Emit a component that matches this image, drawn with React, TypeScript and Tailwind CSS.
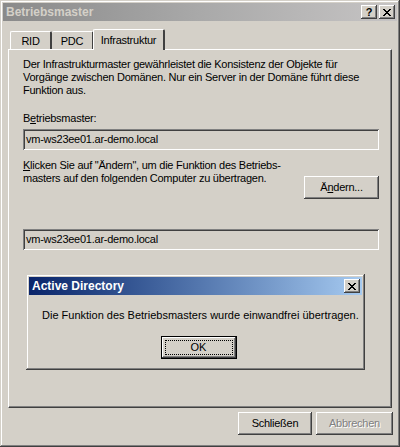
const raised =
  "shadow-[inset_-1px_-1px_#404040,inset_1px_1px_#ffffff,inset_-2px_-2px_#808080,inset_2px_2px_#d4d0c8]";
const sunken =
  "shadow-[inset_1px_1px_#808080,inset_-1px_-1px_#ffffff,inset_2px_2px_#404040,inset_-2px_-2px_#d4d0c8]";

function CaptionButton({ children }: { children: React.ReactNode }) {
  return (
    <div
      className={`w-[16px] h-[14px] bg-[#d4d0c8] ${raised} flex items-center justify-center text-[11px] font-bold leading-none text-black`}
    >
      {children}
    </div>
  );
}

function CloseGlyph() {
  return (
    <svg width="8" height="7" viewBox="0 0 8 7" shapeRendering="crispEdges">
      <path d="M0 0h2v1H0zM6 0h2v1H6zM1 1h2v1H1zM5 1h2v1H5zM2 2h4v1H2zM3 3h2v1H3zM2 4h4v1H2zM1 5h2v1H1zM5 5h2v1H5zM0 6h2v1H0zM6 6h2v1H6z" fill="#000" />
    </svg>
  );
}

function Button({ children, disabled, w = "w-[75px]" }: { children: React.ReactNode; disabled?: boolean; w?: string }) {
  return (
    <div
      className={`${w} h-[23px] bg-[#d4d0c8] ${raised} flex items-center justify-center ${
        disabled ? "text-[#808080] [text-shadow:1px_1px_#ffffff]" : "text-black"
      }`}
    >
      {children}
    </div>
  );
}

function Field({ value }: { value: string }) {
  return (
    <div className={`h-[21px] ${sunken} flex items-center px-[3px]`}>{value}</div>
  );
}

export default function App() {
  return (
    <div className="w-[400px] h-[447px] bg-[#d4d0c8] shadow-[inset_-1px_-1px_#404040,inset_1px_1px_#d4d0c8,inset_-2px_-2px_#808080,inset_2px_2px_#ffffff] p-[3px] flex flex-col text-[11px] leading-[13px] tracking-[-0.25px] text-black font-['Liberation_Sans',Arial,sans-serif] overflow-hidden">
      {/* title bar */}
      <div className="h-[18px] flex items-center pl-[3px] pr-[2px] bg-gradient-to-r from-[#8a8a8a] via-[#a9a9a9] to-[#c6c4c4]">
        <span className="flex-1 font-bold text-[#d4d0c8] text-[12px] tracking-normal">Betriebsmaster</span>
        <div className="flex gap-[2px]">
          <CaptionButton>?</CaptionButton>
          <CaptionButton>
            <CloseGlyph />
          </CaptionButton>
        </div>
      </div>

      <div className="flex-1 flex flex-col px-[5px] pt-[7px]">
        {/* tabs */}
        <div className="flex items-end pl-[2px] h-[21px] relative z-10">
          <div className="h-[18px] w-[42px] border-l border-t border-white border-r-2 border-r-[#404040] rounded-t-[2px] flex items-center justify-center pt-[2px]">
            RID
          </div>
          <div className="h-[18px] w-[42px] border-t border-white border-r-2 border-r-[#404040] rounded-t-[2px] flex items-center justify-center pt-[2px]">
            PDC
          </div>
          <div className="h-[21px] w-[72px] -ml-[1px] bg-[#d4d0c8] border-l border-t border-white border-r-2 border-r-[#404040] rounded-t-[2px] flex items-start justify-center pt-[4px] mb-[-1px]">
            Infrastruktur
          </div>
        </div>

        {/* tab panel */}
        <div className="h-[359px] border-l border-t border-white border-r border-b border-r-[#404040] border-b-[#404040] shadow-[inset_-1px_-1px_#808080] pl-[14px] pr-[12px] pt-[8px] relative">
          <p>
            Der Infrastrukturmaster gewährleistet die Konsistenz der Objekte für
            <br />
            Vorgänge zwischen Domänen. Nur ein Server in der Domäne führt diese
            <br />
            Funktion aus.
          </p>
          <div className="mt-[15px] mb-[4px]">
            B<span className="underline">e</span>triebsmaster:
          </div>
          <Field value="vm-ws23ee01.ar-demo.local" />

          <div className="flex justify-between mt-[8px]">
            <p className="pt-[1px]">
              <span className="underline">K</span>licken Sie auf "Ändern", um die Funktion des Betriebs-
              <br />
              masters auf den folgenden Computer zu übertragen.
            </p>
            <div className="mt-[18px]">
              <Button>
                <span>
                  Ä<span className="underline">n</span>dern...
                </span>
              </Button>
            </div>
          </div>

          <div className="mt-[30px]">
            <Field value="vm-ws23ee01.ar-demo.local" />
          </div>

          {/* message box */}
          <div className="absolute left-[17px] top-[224px] w-[339px] h-[96px] bg-[#d4d0c8] shadow-[inset_-1px_-1px_#404040,inset_1px_1px_#d4d0c8,inset_-2px_-2px_#808080,inset_2px_2px_#ffffff] p-[3px] flex flex-col tracking-normal">
            <div className="h-[18px] flex items-center pl-[3px] pr-[2px] bg-gradient-to-r from-[#0a246a] to-[#a6caf0]">
              <span className="flex-1 font-bold text-white text-[12px]">Active Directory</span>
              <CaptionButton>
                <CloseGlyph />
              </CaptionButton>
            </div>
            <div className="pl-[13px] pt-[14px]">
              Die Funktion des Betriebsmasters wurde einwandfrei übertragen.
            </div>
            <div className="flex justify-center mt-[14px] pl-[6px]">
              <div className="w-[76px] h-[23px] border border-black bg-[#d4d0c8] shadow-[inset_-1px_-1px_#404040,inset_1px_1px_#ffffff,inset_-2px_-2px_#808080] p-[3px]">
                <div className="h-full border border-dotted border-black flex items-center justify-center">
                  OK
                </div>
              </div>
            </div>
          </div>
        </div>

        {/* bottom buttons */}
        <div className="flex justify-end gap-[4px] pt-[4px] -mr-[1px]">
          <Button w="w-[74px]">Schließen</Button>
          <Button w="w-[77px]" disabled>
            Abbrechen
          </Button>
        </div>
      </div>
    </div>
  );
}
